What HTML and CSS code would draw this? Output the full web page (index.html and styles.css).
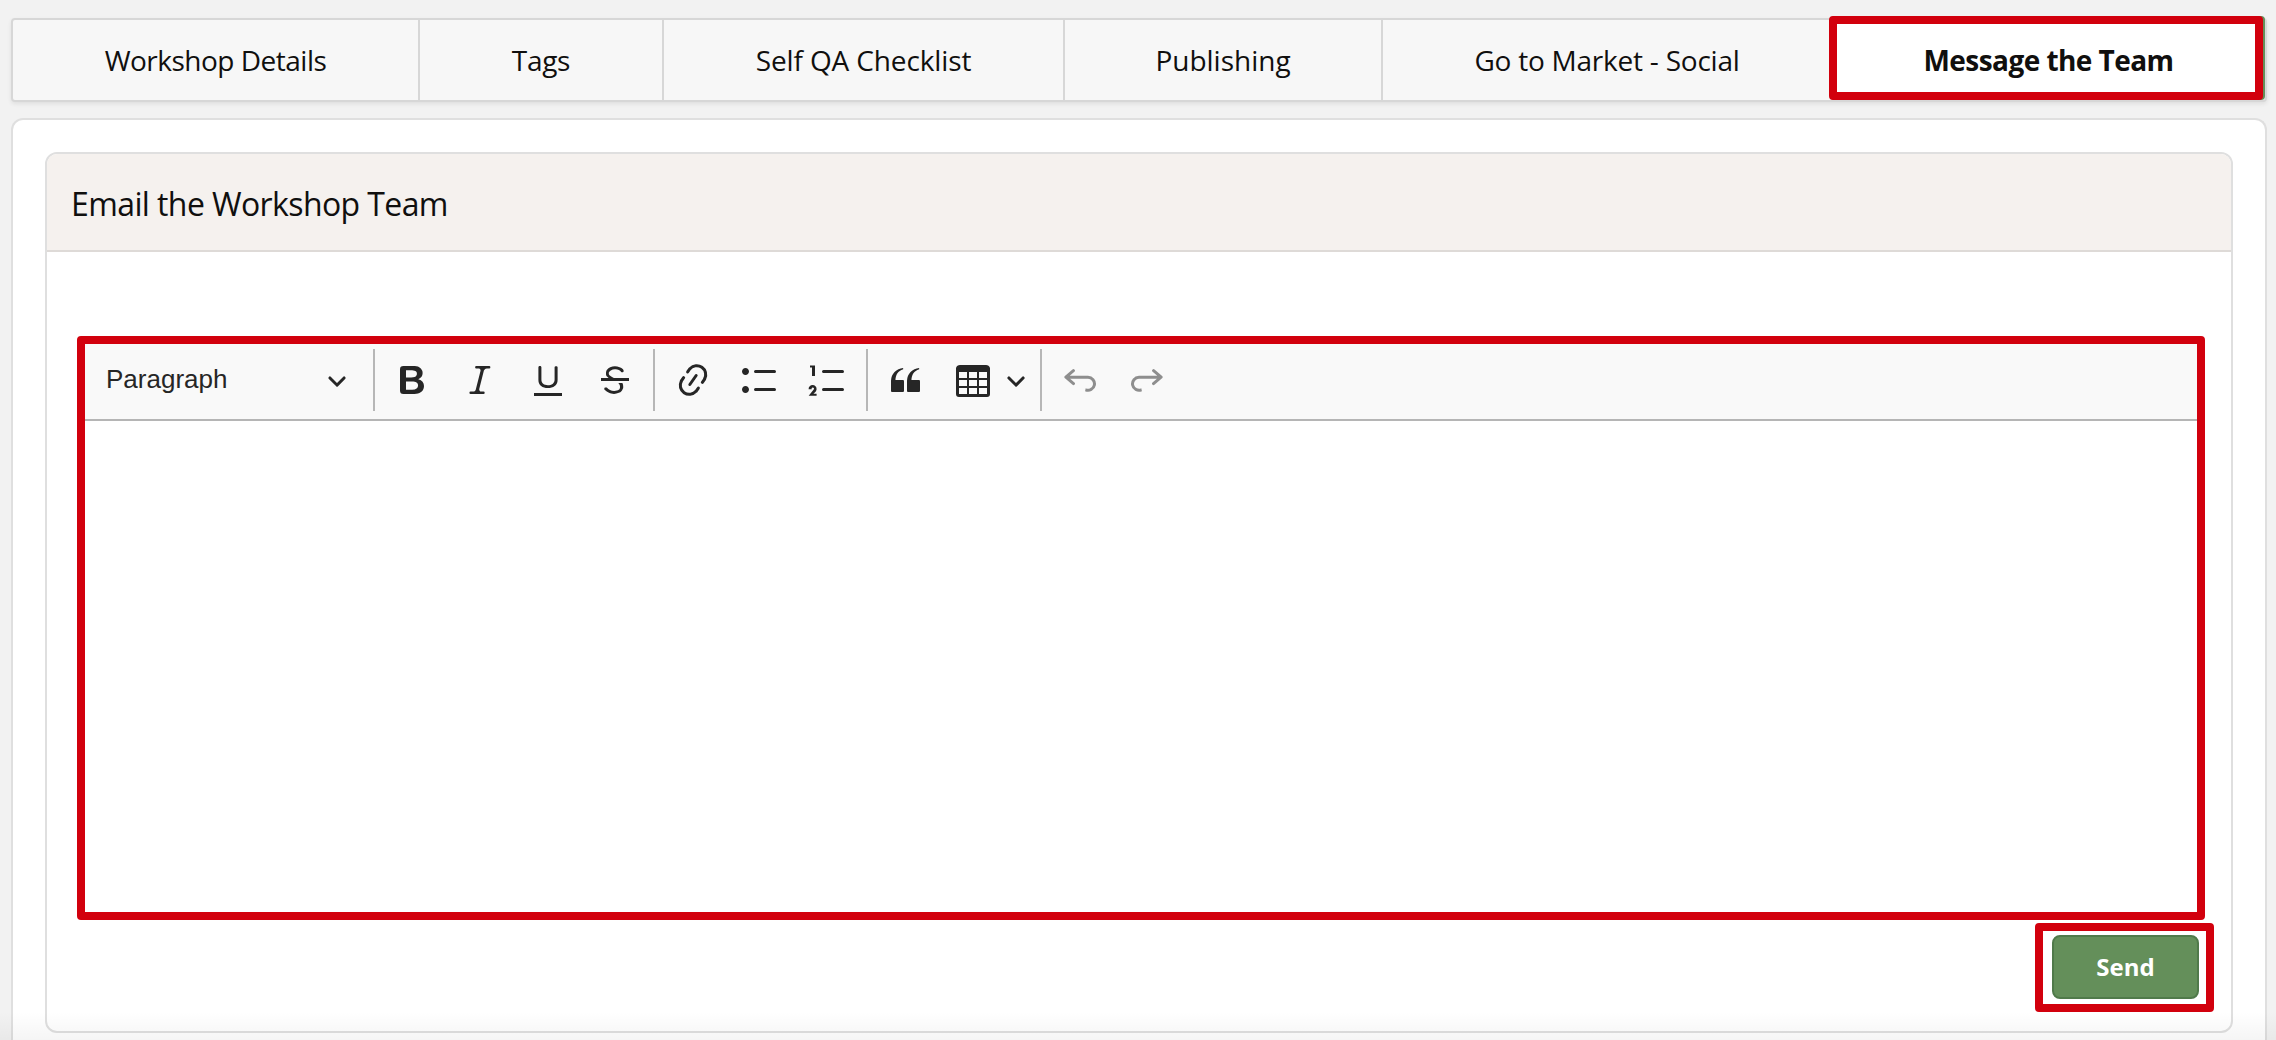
FILE: index.html
```html
<!DOCTYPE html>
<html lang="en">
<head>
<meta charset="utf-8">
<title>Message the Team</title>
<link rel="stylesheet" href="styles.css">
</head>
<body>
<nav class="tabs">
  <a class="tab tab-details">Workshop Details</a>
  <a class="tab tab-tags">Tags</a>
  <a class="tab tab-qa">Self QA Checklist</a>
  <a class="tab tab-publishing">Publishing</a>
  <a class="tab tab-market">Go to Market - Social</a>
  <a class="tab tab-active">Message the Team</a>
</nav>
<main class="panel">
  <section class="card">
    <h2 class="card-header">Email the Workshop Team</h2>
    <div class="card-body">
      <div class="editor">
        <div class="toolbar">
          <button class="heading-select"><span class="heading-label">Paragraph</span>
            <svg class="arrow" viewBox="0 0 10 10"><path d="M.941 4.523a.75.75 0 1 1 1.06-1.06l3.006 3.005 3.005-3.005a.75.75 0 1 1 1.06 1.06l-3.549 3.55a.75.75 0 0 1-1.168-.136L.941 4.523z"/></svg>
          </button>
          <i class="separator"></i>
          <div class="group">
            <svg class="icon" viewBox="0 0 20 20"><path d="M10.187 17H5.773c-.637 0-1.092-.138-1.364-.415-.273-.277-.409-.718-.409-1.323V4.738c0-.617.14-1.062.419-1.332.279-.27.73-.406 1.354-.406h4.68c.69 0 1.288.041 1.793.124.506.083.96.242 1.36.478.341.197.644.447.906.75a3.262 3.262 0 0 1 .808 2.162c0 1.401-.722 2.426-2.167 3.075C15.05 10.175 16 11.315 16 13.01a3.756 3.756 0 0 1-2.296 3.504 6.1 6.1 0 0 1-1.517.377c-.571.073-1.238.11-2 .11zm-.217-6.217H7v4.087h3.069c1.977 0 2.965-.69 2.965-2.072 0-.707-.256-1.22-.768-1.537-.512-.319-1.277-.478-2.296-.478zM7 5.13v3.619h2.606c.729 0 1.292-.067 1.69-.2a1.6 1.6 0 0 0 .91-.765c.165-.267.247-.566.247-.897 0-.707-.26-1.176-.778-1.409-.519-.232-1.31-.348-2.375-.348H7z"/></svg>
            <svg class="icon" viewBox="0 0 20 20"><path d="m9.586 14.633.021.004c-.036.335.095.655.393.962.082.083.173.15.274.201h1.474a.6.6 0 1 1 0 1.2H5.304a.6.6 0 0 1 0-1.2h1.15c.474-.07.809-.182 1.005-.334.157-.122.291-.32.404-.597l2.416-9.55a1.053 1.053 0 0 0-.281-.823 1.12 1.12 0 0 0-.442-.296H8.15a.6.6 0 0 1 0-1.2h6.443a.6.6 0 1 1 0 1.2h-1.195c-.376.056-.65.155-.823.296-.215.175-.423.439-.623.79l-2.366 9.347z"/></svg>
            <svg class="icon" viewBox="0 0 20 20"><path d="M3 18v-1.5h14V18zM5.2 10V3.6c0-.4.4-.6.8-.6.3 0 .7.2.7.6v6.2c0 2 1.3 2.8 3.2 2.8 1.9 0 3.4-.9 3.4-2.9V3.6c0-.3.4-.5.8-.5.3 0 .7.2.7.5V10c0 2.7-2.2 4-4.9 4-2.6 0-4.7-1.2-4.7-4z"/></svg>
            <svg class="icon nudge-left" viewBox="0 0 20 20"><path d="M7 16.4c-.8-.4-1.5-.9-2.2-1.5a.6.6 0 0 1-.2-.5l.3-.6h1c1 1.2 2.1 1.7 3.7 1.7 1 0 1.8-.3 2.3-.6.6-.4.6-1.2.6-1.3.2-1.2-.9-2.1-.9-2.1h2.1c.3.7.4 1.2.4 1.7v.8l-.6 1.2c-.6.8-1.1 1-1.6 1.2a6 6 0 0 1-2.4.6c-1 0-1.8-.3-2.5-.6zM6.8 9 6 8.3c-.4-.5-.5-.8-.5-1.6 0-.7.1-1.3.5-1.8.4-.6 1-1 1.6-1.3a6.3 6.3 0 0 1 4.7 0 4 4 0 0 1 1.7 1l.3.7c0 .1.2.4-.2.7-.4.2-.9.1-1 0a3 3 0 0 0-1.2-1c-.4-.2-1-.3-2-.4-.7 0-1.4.2-2 .6-.8.6-1 .8-1 1.5 0 .8.5 1 1.2 1.5.6.4 1.1.7 1.9 1H6.8z"/><path d="M3 10.5V9h14v1.5z"/></svg>
          </div>
          <i class="separator"></i>
          <div class="group">
            <svg class="icon nudge-right" viewBox="0 0 20 20"><path d="m11.077 15 .991-1.416a.75.75 0 1 1 1.229.86l-1.148 1.64a.748.748 0 0 1-.217.206 5.251 5.251 0 0 1-8.503-5.955.741.741 0 0 1 .12-.274l1.147-1.639a.75.75 0 1 1 1.228.86L4.933 10.7l.006.003a3.75 3.75 0 0 0 6.132 4.294l.006.004zm5.494-5.335a.748.748 0 0 1-.12.274l-1.147 1.639a.75.75 0 1 1-1.228-.86l.86-1.23a3.75 3.75 0 0 0-6.144-4.301l-.86 1.229a.75.75 0 0 1-1.229-.86l1.148-1.64a.748.748 0 0 1 .217-.206 5.251 5.251 0 0 1 8.503 5.955zm-4.563-2.532a.75.75 0 0 1 .184 1.045l-3.155 4.505a.75.75 0 1 1-1.229-.86l3.155-4.506a.75.75 0 0 1 1.045-.184z"/></svg>
            <svg class="icon" viewBox="0 0 20 20"><path d="M7 5.75c0 .414.336.75.75.75h9.5a.75.75 0 1 0 0-1.5h-9.5a.75.75 0 0 0-.75.75zm-6 0C1 4.784 1.777 4 2.75 4c.966 0 1.75.777 1.75 1.75 0 .966-.777 1.75-1.75 1.75C1.784 7.5 1 6.723 1 5.75zm6 9c0 .414.336.75.75.75h9.5a.75.75 0 1 0 0-1.5h-9.5a.75.75 0 0 0-.75.75zm-6 0c0-.966.777-1.75 1.75-1.75.966 0 1.75.777 1.75 1.75 0 .966-.777 1.75-1.75 1.75-.966 0-1.75-.777-1.75-1.75z"/></svg>
            <svg class="icon" viewBox="0 0 20 20"><path d="M7 5.75c0 .414.336.75.75.75h9.5a.75.75 0 1 0 0-1.5h-9.5a.75.75 0 0 0-.75.75zM3.5 3v5H2V3.7H1v-1h2.5V3zM.343 17.857l2.59-3.257H2.92a.6.6 0 1 0-1.04 0H.302a2 2 0 1 1 3.995 0h-.001c-.048.405-.16.734-.333.988-.175.254-.59.692-1.244 1.312H4.3v1h-4l.043-.043zM7 14.75a.75.75 0 0 1 .75-.75h9.5a.75.75 0 1 1 0 1.5h-9.5a.75.75 0 0 1-.75-.75z"/></svg>
          </div>
          <i class="separator separator-wide"></i>
          <div class="group">
            <svg class="icon" viewBox="0 0 20 20"><path d="M3 10.423a6.5 6.5 0 0 1 6.056-6.408l.038.67C6.448 5.423 5.354 7.663 5.22 10H9c.552 0 .5.432.5.986v4.511c0 .554-.448.503-1 .503h-5c-.552 0-.5-.449-.5-1.003v-4.574zm8 0a6.5 6.5 0 0 1 6.056-6.408l.038.67c-2.646.739-3.74 2.979-3.873 5.315H17c.552 0 .5.432.5.986v4.511c0 .554-.448.503-1 .503h-5c-.552 0-.5-.449-.5-1.003v-4.574z"/></svg>
            <div class="table-select">
              <svg class="icon" viewBox="0 0 20 20"><path d="M3 6v3h4V6H3zm0 4v3h4v-3H3zm0 4v3h4v-3H3zm5 3h4v-3H8v3zm5 0h4v-3h-4v3zm4-4v-3h-4v3h4zm0-4V6h-4v3h4zm1.5 8a1.5 1.5 0 0 1-1.5 1.5H3A1.5 1.5 0 0 1 1.5 17V4c.222-.863 1.068-1.5 2-1.5h13c.932 0 1.778.637 2 1.5v13zM12 13v-3H8v3h4zm0-4V6H8v3h4z"/></svg>
              <svg class="arrow" viewBox="0 0 10 10"><path d="M.941 4.523a.75.75 0 1 1 1.06-1.06l3.006 3.005 3.005-3.005a.75.75 0 1 1 1.06 1.06l-3.549 3.55a.75.75 0 0 1-1.168-.136L.941 4.523z"/></svg>
            </div>
          </div>
          <i class="separator separator-history"></i>
          <div class="group disabled">
            <svg class="icon" viewBox="0 0 20 20"><path d="m5.042 9.367 2.189 1.837a.75.75 0 0 1-.965 1.149l-3.788-3.18a.747.747 0 0 1-.21-.284.75.75 0 0 1 .17-.945L6.23 4.762a.75.75 0 1 1 .964 1.15L4.863 7.866h8.917A.75.75 0 0 1 14 7.9a4 4 0 1 1-1.477 7.718l.344-1.489a2.5 2.5 0 1 0 1.094-4.73l.008-.032H5.042z"/></svg>
            <svg class="icon nudge-left" viewBox="0 0 20 20"><path d="m14.958 9.367-2.189 1.837a.75.75 0 0 0 .965 1.149l3.788-3.18a.747.747 0 0 0 .21-.284.75.75 0 0 0-.17-.945L13.77 4.762a.75.75 0 1 0-.964 1.15l2.331 1.955H6.22A.75.75 0 0 0 6 7.9a4 4 0 1 0 1.477 7.718l-.344-1.489A2.5 2.5 0 1 1 6.039 9.4l-.008-.032h8.927z"/></svg>
          </div>
        </div>
        <div class="editable"></div>
      </div>
      <div class="send-frame"><button class="send">Send</button></div>
    </div>
  </section>
</main>
<div class="bottom-fade"></div>
</body>
</html>
```
FILE: styles.css
```css
* { box-sizing: border-box; }

body {
  margin: 0;
  height: 1040px;
  overflow: hidden;
  padding: 18px 9px 0 11px;
  background: #f2f2f2;
  color: #100f0e;
  font-family: "Open Sans", "Noto Sans", sans-serif;
}

.tabs {
  display: flex;
  height: 84px;
  border: 2px solid #d7d7d7;
  border-radius: 4px;
  background: #f7f7f7;
  box-shadow: 0 2px 4px rgba(0, 0, 0, .08);
}

.tab {
  display: flex;
  align-items: center;
  justify-content: center;
  border-right: 2px solid #d7d7d7;
  font-size: 28px;
  white-space: nowrap;
}

.tab-details { width: 407px; letter-spacing: -.5px; }
.tab-tags { width: 244px; letter-spacing: -.3px; }
.tab-qa { width: 401px; letter-spacing: -.13px; }
.tab-publishing { width: 318px; }
.tab-market { width: 448px; border-right: 0; letter-spacing: -.23px; }

.tab-active {
  flex: 1;
  margin: -4px 2px 0 -2px;
  padding: 4px 0 0 5px;
  height: 84px;
  border: 8px solid #d2000d;
  border-radius: 4px;
  background: #fff;
  box-shadow: 2px 0 0 #648f5a;
  font-weight: 700;
  letter-spacing: -.55px;
}

.panel {
  height: 922px;
  margin-top: 16px;
  padding: 32px 32px 0;
  border: 2px solid #dfdfdf;
  border-bottom: 0;
  border-radius: 12px 12px 0 0;
  background: #fff;
}

.card {
  height: 881px;
  border: 2px solid #dfdfdf;
  border-radius: 12px;
  overflow: hidden;
}

.card-header {
  display: flex;
  align-items: center;
  height: 98px;
  margin: 0;
  padding: 2px 0 0 24px;
  border-bottom: 2px solid #dedad7;
  background: #f5f1ee;
  font-size: 32px;
  font-weight: 400;
  letter-spacing: -.6px;
}

.card-body {
  display: flex;
  flex-direction: column;
  padding: 84px 17px 0 30px;
}

.editor {
  width: 2128px;
  height: 584px;
  border: 8px solid #d2000d;
  border-radius: 4px;
}

.toolbar {
  display: flex;
  align-items: center;
  height: 77px;
  padding-bottom: 3px;
  border-bottom: 2px solid #b5b5b5;
  background: #f9f9f9;
}

.heading-select {
  display: flex;
  align-items: center;
  justify-content: space-between;
  width: 288px;
  padding: 0 26px 0 21px;
  border: 0;
  background: none;
  color: #262626;
  font: 26px "Liberation Sans", Arial, sans-serif;
}

.heading-label { padding-bottom: 2px; }

.icon { width: 40px; height: 40px; fill: #262626; }
.arrow { width: 20px; height: 20px; fill: #262626; }
.nudge-left { margin: 0 1px 0 -1px; }
.nudge-right { margin: 0 -1px 0 1px; }
.group { display: flex; gap: 28px; }
.disabled { opacity: .5; }

.table-select {
  display: flex;
  align-items: center;
  gap: 13px;
}

.separator {
  width: 2px;
  height: 62px;
  margin: 0 17px;
  background: #b7b7b7;
}

.heading-select + .separator { margin-left: 0; }
.separator-wide { margin-left: 18px; }
.separator-history { margin: 0 18px 0 14px; }

.send-frame {
  display: flex;
  align-self: flex-end;
  width: 179px;
  height: 89px;
  margin-top: 3px;
  padding: 4px 7px 5px 9px;
  border: 8px solid #d2000d;
  border-radius: 4px;
}

.send {
  flex: 1;
  padding: 0 0 2px;
  border: 2px solid #507a4a;
  border-radius: 8px;
  background: #648f5a;
  color: #fff;
  font: 700 24px "Open Sans", "Noto Sans", sans-serif;
}

.bottom-fade {
  position: absolute;
  left: 0;
  right: 0;
  top: 1012px;
  height: 28px;
  background: linear-gradient(rgba(0, 0, 0, 0), rgba(0, 0, 0, .04));
}
```
